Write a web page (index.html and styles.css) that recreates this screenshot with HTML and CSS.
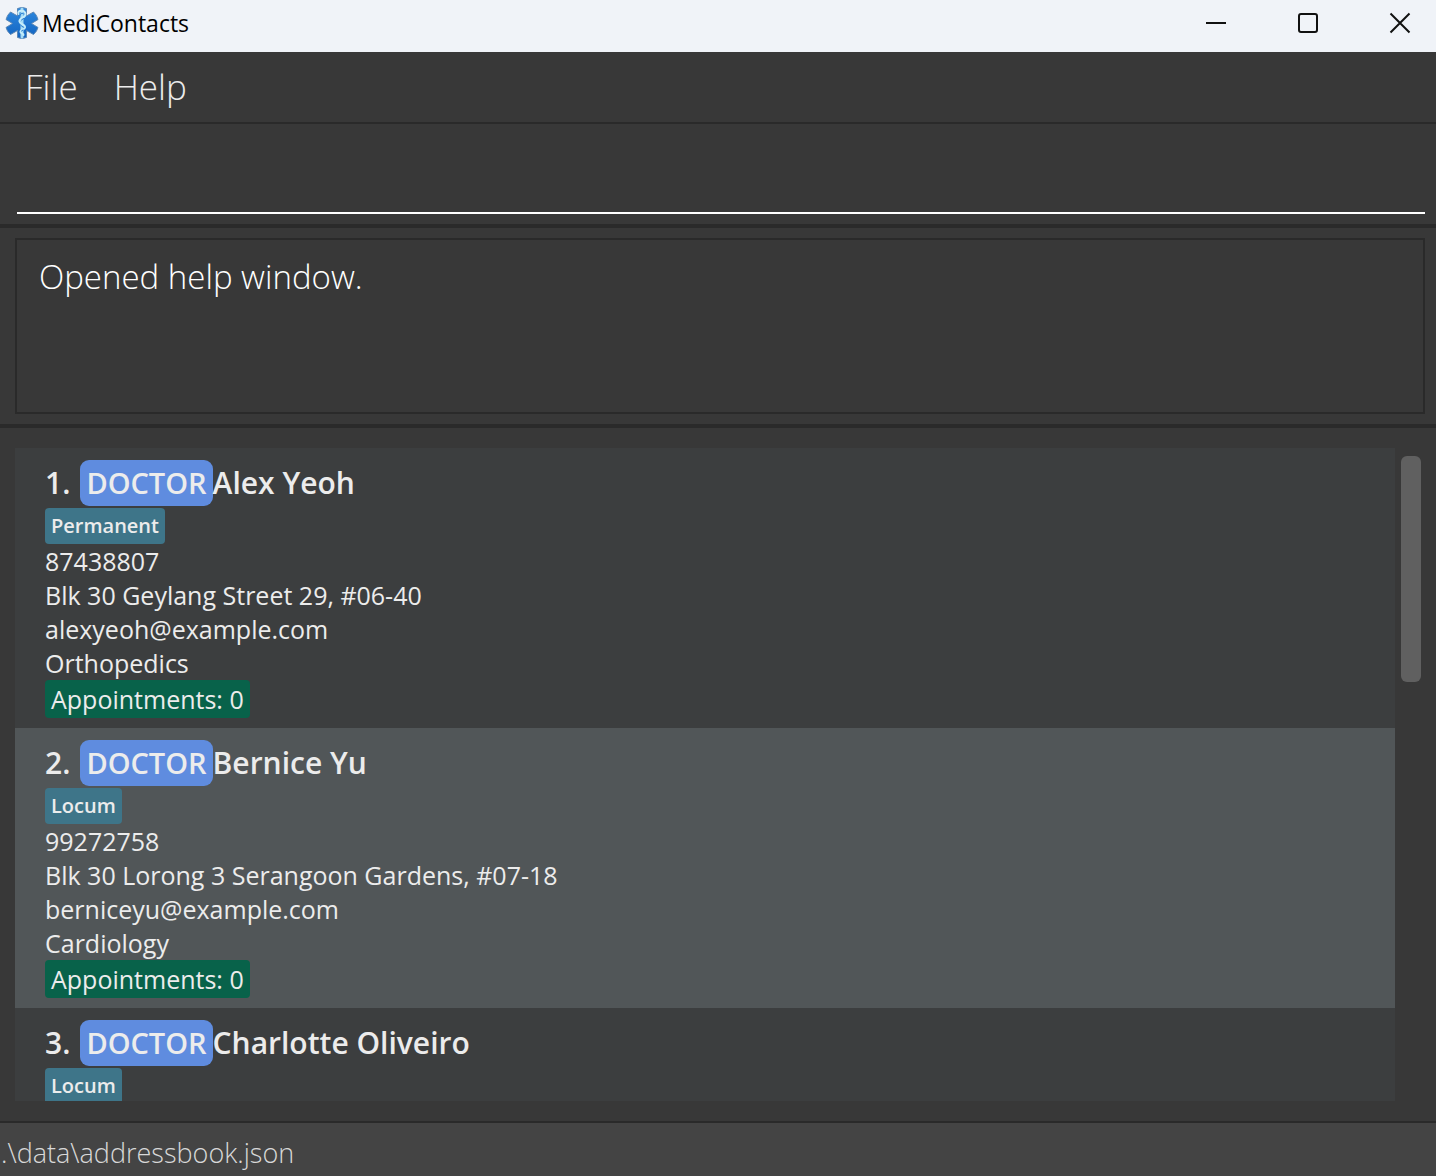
FILE: index.html
```html
<!DOCTYPE html>
<html lang="en">
<head>
<meta charset="utf-8">
<meta name="viewport" content="width=device-width, initial-scale=1">
<title>MediContacts</title>
<link rel="stylesheet" href="styles.css">
</head>
<body>
<header class="titlebar">
  <svg class="logo" viewBox="0 0 34 34" aria-hidden="true">
    <defs>
      <linearGradient id="star" x1="0" y1="0" x2="0" y2="1">
        <stop offset="0" stop-color="#2f8ae0"/>
        <stop offset="1" stop-color="#1263c0"/>
      </linearGradient>
    </defs>
    <path fill="url(#star)" stroke="#5b87b5" stroke-width="1" stroke-linejoin="round" d="M12.500 2.500Q17 .5 21.500 2.500V10L28.500 6Q32 9 33 13.500L26.500 17.500L33 21.500Q32 25.500 28.500 28.500L21.500 24.500V31.500Q17 33.500 12.500 31.500V24.500L5.500 28.500Q2 25.500 1 21.500L7.500 17.500L1 13.500Q2 9 5.500 6L12.500 10Z"/>
    <path fill="none" stroke="#a5dcf5" stroke-width="3" stroke-linecap="round" d="M17 3V31"/>
    <path fill="none" stroke="#c5edfa" stroke-width="2" stroke-linecap="round" d="M13.500 8C12 3.500 20 3.500 20.500 8C21 12 14 11.500 14.500 15.500C15 18.500 20.500 18 20 21.500C19.500 24 15 23.500 15.500 26C16 28 19 27.500 18.500 29"/>
    <path fill="none" stroke="#2479cf" stroke-width="1" stroke-linecap="round" d="M15.500 9Q15.500 6.500 18 7.500M18.500 12.500L16.500 14M16 19.500L18 21M18 24L16.500 25"/>
  </svg>
  <h1 class="title">MediContacts</h1>
  <div class="controls">
    <button type="button" aria-label="Minimize"><svg viewBox="0 0 22 22"><path d="M1 11H21"/></svg></button>
    <button type="button" aria-label="Maximize"><svg viewBox="0 0 22 22"><rect x="2" y="2" width="18" height="18" rx="2"/></svg></button>
    <button type="button" aria-label="Close"><svg viewBox="0 0 22 22"><path d="M1.500 1.500L20.500 20.500M20.500 1.500L1.500 20.500"/></svg></button>
  </div>
</header>
<nav class="menubar">
  <button type="button">File</button>
  <button type="button">Help</button>
</nav>
<main class="workspace">
  <form class="command">
    <input type="text" aria-label="Command">
  </form>
  <section class="result">
    <output class="message">Opened help window.</output>
  </section>
  <section class="people">
    <ol class="list">
      <li class="card">
        <h2 class="heading"><span class="index">1.</span><span class="role">DOCTOR</span><span class="name">Alex Yeoh</span></h2>
        <span class="tag">Permanent</span>
        <p>87438807</p>
        <p>Blk 30 Geylang Street 29, #06-40</p>
        <p>alexyeoh@example.com</p>
        <p>Orthopedics</p>
        <span class="appointments">Appointments: 0</span>
      </li>
      <li class="card">
        <h2 class="heading"><span class="index">2.</span><span class="role">DOCTOR</span><span class="name">Bernice Yu</span></h2>
        <span class="tag">Locum</span>
        <p>99272758</p>
        <p>Blk 30 Lorong 3 Serangoon Gardens, #07-18</p>
        <p>berniceyu@example.com</p>
        <p>Cardiology</p>
        <span class="appointments">Appointments: 0</span>
      </li>
      <li class="card">
        <h2 class="heading"><span class="index">3.</span><span class="role">DOCTOR</span><span class="name">Charlotte Oliveiro</span></h2>
        <span class="tag">Locum</span>
      </li>
    </ol>
    <div class="scrollbar"><div class="thumb"></div></div>
  </section>
</main>
<footer class="statusbar">.\data\addressbook.json</footer>
</body>
</html>
```
FILE: styles.css
```css
* {
  box-sizing: border-box;
}

body {
  margin: 0;
  height: 100vh;
  display: flex;
  flex-direction: column;
  overflow: hidden;
  background: #383838;
  color: #ececec;
  font-family: "Segoe UI", "Open Sans", "Noto Sans", sans-serif;
  font-size: 25px;
  line-height: 34px;
}

h1, h2, p, ol {
  margin: 0;
  padding: 0;
}

button {
  border: 0;
  padding: 0;
  background: none;
  color: inherit;
  font: inherit;
}

.titlebar {
  display: flex;
  flex: none;
  align-items: center;
  height: 52px;
  padding: 0 0 6px 5px;
  background: #f0f3f8;
  color: #000;
}

.logo {
  width: 34px;
  height: 34px;
  margin-right: 3px;
}

.title {
  font-size: 23px;
  font-weight: 400;
}

.controls {
  display: flex;
  gap: 20px;
  margin-left: auto;
}

.controls button {
  display: flex;
  align-items: center;
  justify-content: center;
  width: 72px;
  height: 46px;
}

.controls svg {
  width: 22px;
  height: 22px;
  fill: none;
  stroke: #111;
  stroke-width: 2;
}

.menubar {
  display: flex;
  flex: none;
  gap: 36px;
  height: 72px;
  padding: 0 25px;
  border-bottom: 2px solid #2a2a2a;
  font-size: 35px;
  font-weight: 300;
}

.workspace {
  display: flex;
  flex: 1;
  flex-direction: column;
  min-height: 0;
}

.command {
  flex: none;
  padding: 10px 11px 10px 17px;
  border-bottom: 4px solid #2a2a2a;
}

.command input {
  display: block;
  width: 100%;
  height: 80px;
  padding: 0 8px;
  border: 0;
  border-bottom: 2px solid #fff;
  outline: 0;
  background: none;
  color: #fff;
  font: inherit;
  font-size: 33px;
  font-weight: 300;
}

.result {
  flex: none;
  padding: 10px 11px 10px 15px;
  border-bottom: 4px solid #2a2a2a;
}

.message {
  display: block;
  min-height: 176px;
  padding: 14px 22px;
  border: 2px solid #2a2a2a;
  color: #fff;
  font-size: 33px;
  font-weight: 300;
  line-height: 46px;
}

.people {
  display: flex;
  flex: 1;
  min-height: 0;
  padding: 20px 15px;
}

.list {
  flex: 1;
  overflow: hidden;
  background: #3c3e3f;
  list-style: none;
}

.card {
  display: flex;
  flex-direction: column;
  align-items: flex-start;
  padding: 12px 30px 10px;
}

.card:nth-child(even) {
  background: #515658;
}

.heading {
  display: flex;
  margin-bottom: 2px;
  font-size: 30px;
  font-weight: 600;
  line-height: 46px;
}

.index {
  margin-right: 10px;
}

.role {
  padding: 0 6px;
  border-radius: 9px;
  background: #5f8cdf;
  font-size: 29px;
}

.tag {
  padding: 0 6px;
  border-radius: 4px;
  background: #3e7589;
  font-size: 20px;
  font-weight: 600;
  line-height: 36px;
}

.appointments {
  padding: 0 6px;
  border-radius: 4px;
  background: #08624a;
  line-height: 38px;
}

.scrollbar {
  width: 26px;
  padding: 8px 0 8px 6px;
}

.thumb {
  width: 20px;
  height: 226px;
  border-radius: 6px;
  background: #606060;
}

.statusbar {
  flex: none;
  height: 55px;
  padding: 0 1px;
  border-top: 2px solid #2a2a2a;
  background: #444;
  color: #d8d8d8;
  font-size: 27px;
  font-weight: 300;
  line-height: 60px;
}
```
